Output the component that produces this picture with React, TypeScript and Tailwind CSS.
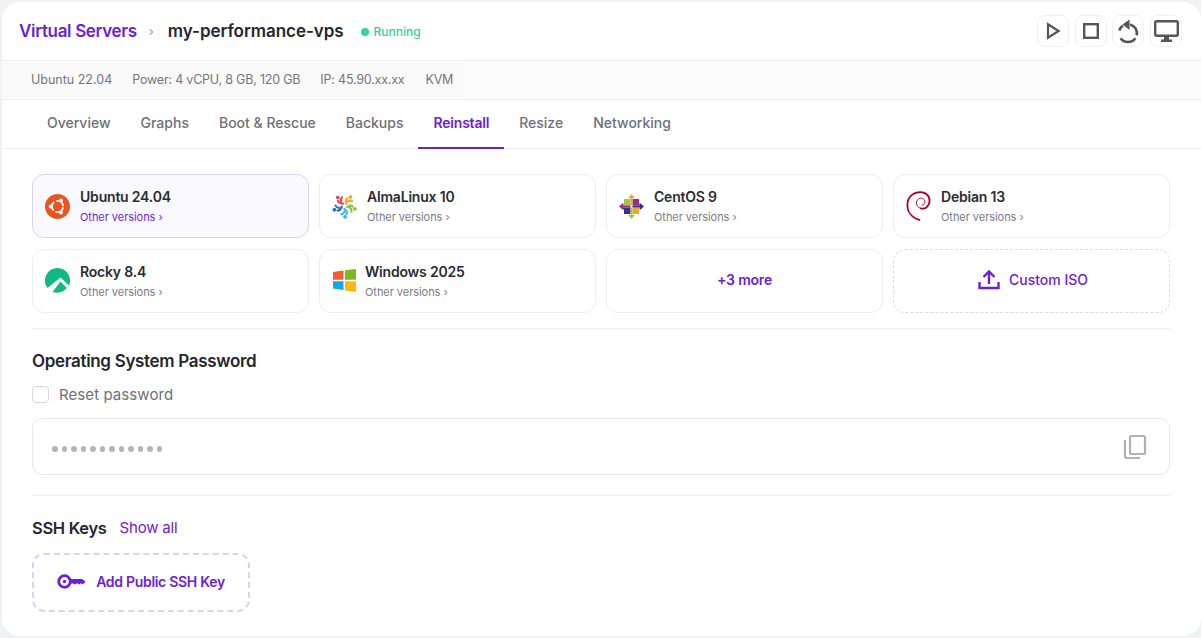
import type { ReactNode } from "react";

const font = { fontFamily: '"Inter", "Noto Sans", sans-serif' };

function UbuntuLogo() {
  return (
    <svg width="25" height="25" viewBox="0 0 25 25">
      <circle cx="12.5" cy="12.5" r="12.5" fill="#e95420" />
      <circle cx="12.5" cy="12.5" r="5.6" fill="none" stroke="#fff" strokeWidth="1.8" strokeDasharray="9.6 2.1" strokeDashoffset="-1" />
      <circle cx="5.6" cy="12.5" r="1.9" fill="#fff" />
      <circle cx="16" cy="6.4" r="1.9" fill="#fff" />
      <circle cx="16" cy="18.6" r="1.9" fill="#fff" />
    </svg>
  );
}

const almaColors = ["#e8414a", "#f5a623", "#86c440", "#3fb6e8", "#1c6fc4"];

function AlmaLogo() {
  return (
    <svg width="26" height="26" viewBox="0 0 26 26" fill="none" strokeLinecap="round">
      {almaColors.map((color, i) => (
        <g key={color} transform={`rotate(${i * 72} 13 13)`}>
          <circle cx="6" cy="4.2" r="1.9" fill={color} />
          <path d="M11.5 10.5 C8.5 10.5 6 9 6.4 7.5 M9.5 8 C9 6.5 9.5 5 10.5 4" stroke={color} strokeWidth="2.2" />
        </g>
      ))}
    </svg>
  );
}

function CentosLogo() {
  return (
    <svg width="25" height="25" viewBox="0 0 25 25">
      <path d="M5 5 H11.5 V11.5 H3 L5 9 Z" fill="#a0c53e" />
      <path d="M13.5 5 H20 V9 L22 11.5 H13.5 Z" fill="#9c2a8c" />
      <path d="M3 13.5 H11.5 V20 H5 V16 Z" fill="#3b2f8c" />
      <path d="M13.5 13.5 H22 L20 16 V20 H13.5 Z" fill="#efa724" />
      <path d="M12.5 0 L16 4 H13.4 V11.5 H11.6 V4 H9 Z" fill="#efa724" />
      <path d="M25 12.5 L21 16 V13.4 H13.5 V11.6 H21 V9 Z" fill="#3b2f8c" />
      <path d="M12.5 25 L9 21 H11.6 V13.5 H13.4 V21 H16 Z" fill="#a0c53e" />
      <path d="M0 12.5 L4 9 V11.6 H11.5 V13.4 H4 V16 Z" fill="#9c2a8c" />
    </svg>
  );
}

function DebianLogo() {
  return (
    <svg width="26" height="32" viewBox="0 0 26 32" fill="none" stroke="#a80030" strokeLinecap="round">
      <path d="M14 30.5 C6 28 1 22 1.5 14 C2 6 8 1.5 15 1.5 C21 1.5 25 6 24.5 11.5 C24 17 19.5 19.5 15.5 18.5" strokeWidth="1.9" />
      <path d="M15.5 18.5 C11.5 17.5 10 13.5 11.5 10.5 C13 7.5 17 7 19 9.5 C20.5 11.5 19.5 14.5 17 15" strokeWidth="1" />
    </svg>
  );
}

function RockyLogo() {
  return (
    <svg width="25" height="25" viewBox="0 0 25 25">
      <path d="M12.5 0 A12.5 12.5 0 0 1 24 17.5 L15.5 9.5 L2.5 20 A12.5 12.5 0 0 1 12.5 0 Z" fill="#10b981" />
      <path d="M15.5 13.5 L21.8 20 A12.5 12.5 0 0 1 7.5 24 Z" fill="#10b981" />
    </svg>
  );
}

function WindowsLogo() {
  return (
    <svg width="23" height="23" viewBox="0 0 23 23">
      <path d="M0 3 L10.5 1.5 V10.8 H0 Z" fill="#f25f2c" />
      <path d="M12 1.2 L23 0 V10.8 H12 Z" fill="#80b71c" />
      <path d="M0 12.2 H10.5 V21 L0 19.6 Z" fill="#16a5e6" />
      <path d="M12 12.2 H23 V23 L12 21.4 Z" fill="#fcb814" />
    </svg>
  );
}

function OsCard({ name, logo, active, gap = "gap-[10px]" }: { name: string; logo: ReactNode; active?: boolean; gap?: string }) {
  return (
    <div
      className={`flex h-[64px] items-center rounded-[12px] border pl-[12px] ${gap} ${
        active ? "border-[#d9d3f5] bg-[#faf9ff]" : "border-[#eeeef0] bg-white"
      }`}
    >
      <div className="flex w-[25px] shrink-0 justify-center">{logo}</div>
      <div className="flex flex-col">
        <span className="text-[14px] leading-[20px] font-semibold tracking-[-0.2px] text-[#2b2b33]">{name}</span>
        <span className={`mt-[2px] text-[11px] leading-[16px] tracking-[-0.05px] ${active ? "text-[#6d28d9]" : "text-[#7b7b85]"}`}>
          Other versions ›
        </span>
      </div>
    </div>
  );
}

const tabs = ["Overview", "Graphs", "Boot & Rescue", "Backups", "Reinstall", "Resize", "Networking"];

function IconButton({ children }: { children: ReactNode }) {
  return (
    <div className="flex h-[32px] w-[32px] items-center justify-center rounded-[8px] border border-[#f0f0f2] bg-white">{children}</div>
  );
}

export default function App() {
  return (
    <div className="h-[638px] w-[1201px] overflow-hidden bg-[#f1f2f5] pt-[2px] pb-[2px] pl-[2px]" style={font}>
      <div className="flex h-full flex-col overflow-hidden rounded-[18px] bg-white">
        <div className="flex h-[58px] shrink-0 items-center justify-between pr-[19px] pl-[17px]">
          <div className="flex items-center pt-[1px]">
            <span className="text-[17px] font-semibold tracking-[-0.33px] text-[#6b21d9]">Virtual Servers</span>
            <span className="ml-[12px] text-[13px] text-[#9a9aa3]">›</span>
            <span className="ml-[14px] text-[17px] font-semibold tracking-[-0.05px] text-[#26262e]">my-performance-vps</span>
            <span className="ml-[17px] h-[8px] w-[8px] rounded-full bg-[#34d399]" />
            <span className="ml-[5px] text-[12px] font-medium text-[#34d399]">Running</span>
          </div>
          <div className="flex items-center gap-[5.6px]">
            <IconButton>
              <svg width="15" height="18" viewBox="0 0 15 18" fill="none" stroke="#55555c" strokeWidth="2.2">
                <path d="M2 2.2 L12.6 9 L2 15.8 Z" />
              </svg>
            </IconButton>
            <IconButton>
              <svg width="16" height="16" viewBox="0 0 16 16" fill="none" stroke="#55555c" strokeWidth="2.4">
                <rect x="1.2" y="1.2" width="13.6" height="13.6" />
              </svg>
            </IconButton>
            <IconButton>
              <svg width="22" height="25" viewBox="0 0 22 25" fill="none" stroke="#55555c" strokeWidth="2.6">
                <path d="M13 5.4 A9 9 0 0 1 19.69 16.33" />
                <path d="M18.37 19.16 A9 9 0 0 1 3.63 19.16" />
                <path d="M2.31 11.67 A9 9 0 0 1 5.84 6.62" />
                <path d="M12.5 0.5 V11 L5.5 5.5 Z" fill="#55555c" stroke="none" />
              </svg>
            </IconButton>
            <IconButton>
              <svg width="25" height="23" viewBox="0 0 25 23" fill="none">
                <rect x="1.2" y="1.2" width="22.6" height="14.6" rx="1.5" stroke="#55555c" strokeWidth="2.4" />
                <path d="M10 16 H15 V19.5 H18 V22 H7 V19.5 H10 Z" fill="#55555c" />
              </svg>
            </IconButton>
          </div>
        </div>

        <div className="flex h-[40px] shrink-0 border-y border-[#eeeef0] bg-[#fcfcfc] text-[12.5px] tracking-[-0.2px] text-[#75757e]">
          <div className="flex items-center bg-[#fafafa] pr-[12px] pl-[29px]">
            <span className="tracking-normal">Ubuntu 22.04</span>
            <span className="ml-[20px]">Power: 4 vCPU, 8 GB, 120 GB</span>
            <span className="ml-[20px]">IP: 45.90.xx.xx</span>
            <span className="ml-[21px]">KVM</span>
          </div>
        </div>

        <div className="flex h-[49px] shrink-0 border-b border-[#eeeef0] pl-[30px]">
          {tabs.map((tab) => (
            <div
              key={tab}
              className={`-mb-px flex h-[49px] items-center border-b-2 px-[15px] pb-[2px] text-[14px] font-medium ${
                tab === "Reinstall" ? "border-[#6b21d9] font-semibold tracking-[-0.2px] text-[#6b21d9]" : "border-transparent text-[#6f6f78]"
              }`}
            >
              {tab}
            </div>
          ))}
        </div>

        <div className="pt-[25px] pr-[31px] pl-[30px]">
          <div className="grid grid-cols-4 gap-x-[10px] gap-y-[10.5px]">
            <OsCard name="Ubuntu 24.04" logo={<UbuntuLogo />} active />
            <OsCard name="AlmaLinux 10" logo={<AlmaLogo />} />
            <OsCard name="CentOS 9" logo={<CentosLogo />} />
            <OsCard name="Debian 13" logo={<DebianLogo />} />
            <OsCard name="Rocky 8.4" logo={<RockyLogo />} />
            <OsCard name="Windows 2025" logo={<WindowsLogo />} gap="gap-[8px]" />
            <div className="flex h-[64px] items-center justify-center rounded-[12px] border border-[#eeeef0] pb-[2px] text-[14px] font-semibold tracking-[-0.2px] text-[#6b21d9]">
              +3 more
            </div>
            <div className="flex h-[64px] items-center justify-center gap-[9px] rounded-[12px] border border-dashed border-[#dcd8f0] pb-[2px] pl-[3px] text-[14px] font-medium text-[#6b21d9]">
              <svg width="22" height="21" viewBox="0 0 22 21" fill="none" stroke="#6b21d9" strokeWidth="2.4">
                <path d="M11 15 V3" />
                <path d="M5.5 8 L11 2.5 L16.5 8" />
                <path d="M1.5 13 V19 H20.5 V13" />
              </svg>
              Custom ISO
            </div>
          </div>

          <div className="mt-[15.5px] border-t border-[#f0f0f2] pt-[20px]">
            <h2 className="text-[17px] leading-[24px] font-semibold tracking-[-0.32px] text-[#26262e]">Operating System Password</h2>
            <div className="mt-[10.5px] flex items-center gap-[10px]">
              <div className="h-[17px] w-[17px] rounded-[4px] border border-[#d8d8dc]" />
              <span className="text-[15px] tracking-[0.08px] text-[#6f6f78]">Reset password</span>
            </div>
            <div className="mt-[12px] flex h-[57px] items-center justify-between rounded-[10px] border border-[#e8e8ea] pr-[22px] pl-[19px]">
              <div className="flex gap-[4px] pt-[5px]">
                {Array.from({ length: 12 }).map((_, i) => (
                  <span key={i} className="h-[5.5px] w-[5.5px] rounded-full bg-[#b4b4bb]" />
                ))}
              </div>
              <svg width="24" height="26" viewBox="0 0 24 26" fill="none" stroke="#b0b0b6" strokeWidth="2.2">
                <rect x="7" y="2" width="15" height="18" rx="1.5" />
                <path d="M2 6 V22 A2 2 0 0 0 4 24 H17" />
              </svg>
            </div>
          </div>

          <div className="mt-[20px] border-t border-[#f0f0f2] pt-[20px]">
            <div className="flex items-center gap-[13px]">
              <h2 className="text-[16.5px] leading-[24px] font-semibold tracking-[-0.32px] text-[#26262e]">SSH Keys</h2>
              <span className="pt-[1px] text-[15px] tracking-[-0.2px] text-[#6b21d9]">Show all</span>
            </div>
            <div className="mt-[13px] flex h-[59px] w-[218px] items-center justify-center gap-[10px] rounded-[12px] border-2 border-dashed border-[#d9d3f5] pb-[2px] text-[14px] font-semibold tracking-[-0.3px] text-[#6b21d9]">
              <svg width="29" height="15" viewBox="0 0 29 15" fill="none">
                <circle cx="7.5" cy="7.5" r="5.8" stroke="#6b21d9" strokeWidth="2.8" />
                <circle cx="7.5" cy="7.5" r="1.7" fill="#6b21d9" />
                <path d="M13 5 H25 L28.5 7.5 L26 10.5 L24 9.3 L22 10.5 L20 9.3 L18 10.5 L16 9.6 H13 Z" fill="#6b21d9" />
              </svg>
              Add Public SSH Key
            </div>
          </div>
        </div>
      </div>
    </div>
  );
}
